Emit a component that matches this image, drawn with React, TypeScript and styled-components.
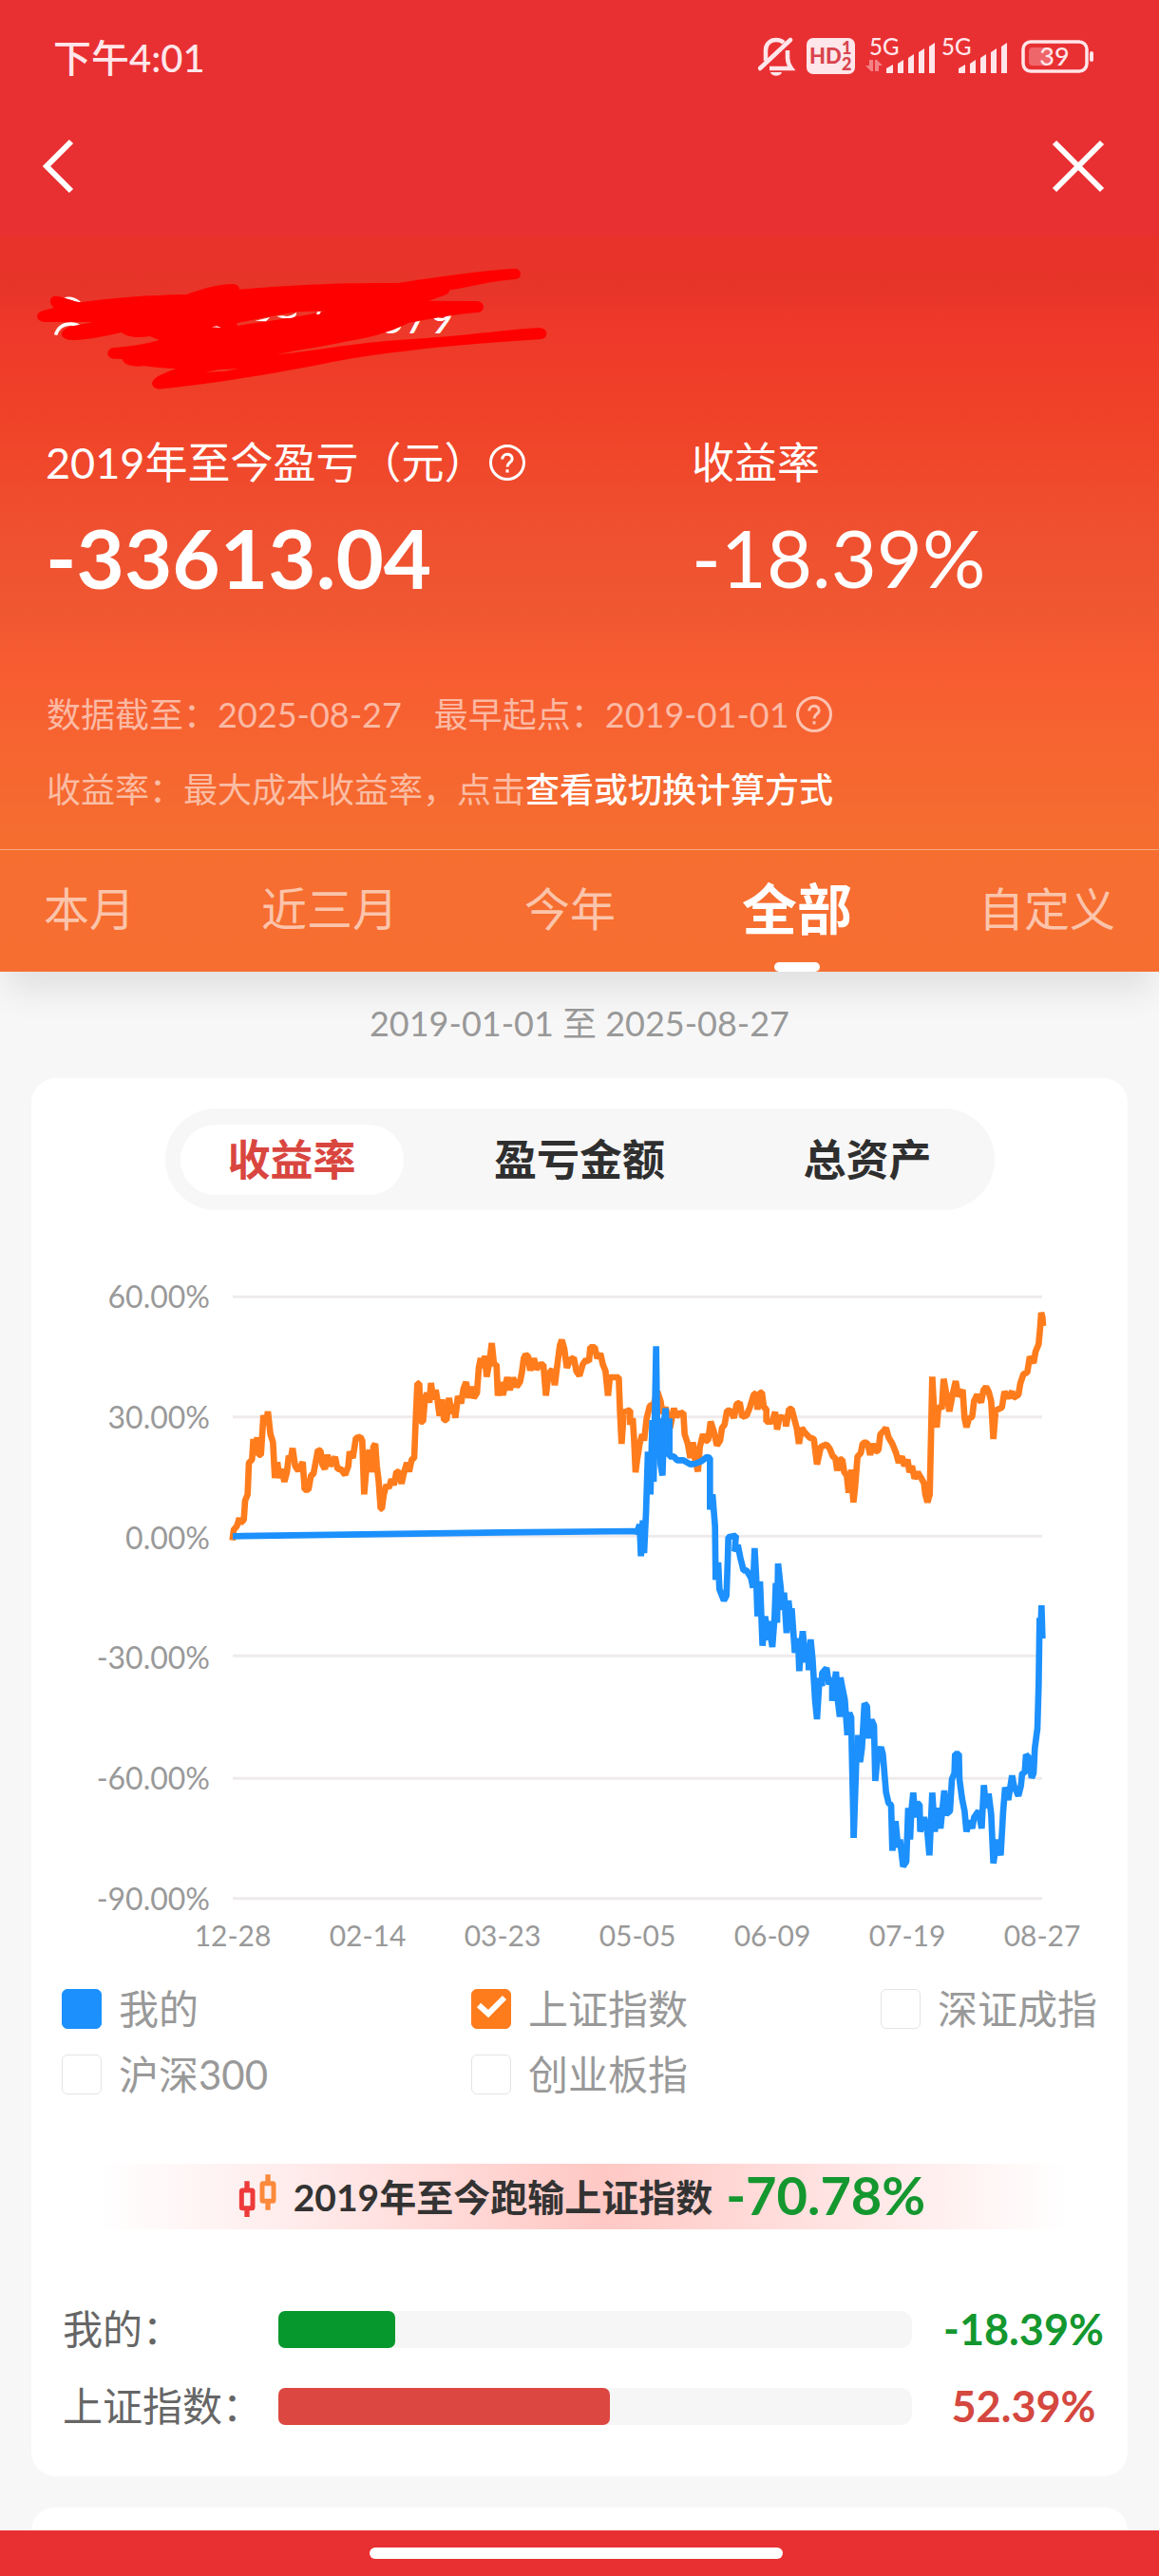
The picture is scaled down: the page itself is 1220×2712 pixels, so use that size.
import React, { useState } from "react";
import styled, { createGlobalStyle } from "styled-components";

const GlobalStyle = createGlobalStyle`
  * { box-sizing: border-box; }
  body {
    margin: 0;
    background: #f7f7f7;
    font-family: Lato, "Noto Sans CJK SC", sans-serif;
  }
  button, input { font: inherit; color: inherit; margin: 0; }
  button { border: 0; padding: 0; background: none; cursor: pointer; }
  svg { display: block; }
`;

const Page = styled.div`
  min-height: 100vh;
  display: flex;
  flex-direction: column;
  overflow: hidden;
`;

/* ---------- header ---------- */

const Header = styled.header`
  color: #fff;
  background: linear-gradient(
    #e83033 0px, #e83033 247px, #e73229 249px, #e8352a 310px, #ee382a 340px,
    #f04228 440px, #ef5030 560px, #ef5731 640px, #f75c31 700px,
    #f66630 810px, #f56e30 880px, #f76e31 100%
  );
  box-shadow: 0 26px 34px -6px rgba(0, 0, 0, 0.09);
  position: relative;
`;

const StatusBar = styled.div`
  height: 120px;
  padding: 0 68px 2px 56px;
  display: flex;
  align-items: center;
  justify-content: space-between;
  color: #ffe6ea;
  font-size: 40px;
  font-weight: 500;
`;

const NavBar = styled.nav`
  height: 110px;
  padding: 0 57px 0 43px;
  display: flex;
  align-items: center;
  justify-content: space-between;
`;

const Account = styled.div`
  position: relative;
  width: 560px;
  height: 160px;
  margin: 30px 0 0 30px;
  padding: 50px 112px 0 0;
  display: flex;
  justify-content: flex-end;
  align-items: flex-start;
  font-size: 45px;
  line-height: 48px;
`;

const Scribble = styled.svg`
  position: absolute;
  inset: 0;
  width: 100%;
  height: 100%;
`;

const Summary = styled.div`
  display: grid;
  grid-template-columns: 680fr 440fr;
  padding: 40px 52px 0 48px;
`;

const SummaryLabel = styled.div`
  display: flex;
  align-items: center;
  gap: 2px;
  height: 54px;
  font-size: 45px;
  line-height: 54px;
`;

const SummaryValue = styled.div<{ $strong?: boolean }>`
  margin-top: 29px;
  line-height: 88px;
  font-size: ${(p) => (p.$strong ? 87 : 83)}px;
  font-weight: ${(p) => (p.$strong ? 700 : 400)};
`;

const Notes = styled.div`
  padding: 96px 50px 0 49px;
  display: grid;
  gap: 29px;
  font-size: 36px;
  line-height: 50px;
  color: rgba(255, 255, 255, 0.56);
`;

const NoteRow = styled.div`
  display: flex;
  align-items: center;
`;

const NoteText = styled.span`
  margin-right: 34px;
`;

const NoteEnd = styled.span`
  margin-right: 6px;
`;

const NoteLink = styled.a`
  color: #fff;
  font-weight: 500;
  text-decoration: none;
`;

const PeriodTabs = styled.div`
  display: flex;
  justify-content: space-between;
  align-items: stretch;
  height: 129px;
  margin-top: 38px;
  padding: 0 46px;
  border-top: 1px solid rgba(255, 255, 255, 0.4);
`;

const PeriodTab = styled.button<{ $active: boolean }>`
  position: relative;
  padding-bottom: 10px;
  font-size: ${(p) => (p.$active ? 58 : 48)}px;
  font-weight: ${(p) => (p.$active ? 700 : 400)};
  color: ${(p) => (p.$active ? "#fff" : "rgba(255, 255, 255, 0.6)")};
  &::after {
    content: "";
    display: ${(p) => (p.$active ? "block" : "none")};
    position: absolute;
    left: calc(50% - 24px);
    bottom: 0;
    width: 48px;
    height: 10px;
    border-radius: 5px;
    background: #fff;
  }
`;

/* ---------- body ---------- */

const Range = styled.div`
  padding: 27px 0 31px;
  text-align: center;
  font-size: 36px;
  line-height: 54px;
  color: #999;
`;

const Card = styled.section`
  margin: 0 33px;
  padding: 32px 0 53px;
  background: #fff;
  border-radius: 26px;
`;

const NextCard = styled.section`
  flex: 1;
  min-height: 24px;
  margin: 33px 33px 0;
  background: #fff;
  border-radius: 26px 26px 0 0;
`;

const Segments = styled.div`
  display: flex;
  justify-content: space-between;
  align-items: center;
  width: 873px;
  max-width: 100%;
  height: 107px;
  margin: 0 auto;
  padding: 0 16px;
  border-radius: 54px;
  background: #f7f7f7;
`;

const Segment = styled.button<{ $active: boolean }>`
  width: 235px;
  height: 74px;
  border-radius: 37px;
  font-size: 45px;
  line-height: 74px;
  font-weight: 700;
  background: ${(p) => (p.$active ? "#fff" : "transparent")};
  color: ${(p) => (p.$active ? "#d9463f" : "#2f2f2f")};
`;

const Chart = styled.div`
  display: grid;
  grid-template-columns: 188px 1fr;
  column-gap: 24px;
  padding: 91px 90px 0 0;
  font-size: 32px;
  line-height: 36px;
  color: #999;
`;

const YAxis = styled.div`
  display: flex;
  flex-direction: column;
  justify-content: space-between;
  margin: -18px 0;
  text-align: right;
`;

const Plot = styled.svg`
  width: 100%;
  height: auto;
  overflow: visible;
`;

const XAxis = styled.div`
  display: grid;
  grid-template-columns: repeat(7, 1fr);
  margin: 20px 19px 0 141px;
  font-size: 30px;
  line-height: 36px;
  color: #999;
  text-align: center;
`;

const Legend = styled.div`
  display: grid;
  grid-template-columns: 431fr 431fr 229fr;
  row-gap: 27px;
  margin: 39px 31px 0 32px;
`;

const LegendItem = styled.label`
  display: flex;
  align-items: center;
  gap: 18px;
  height: 42px;
  font-size: 42px;
  line-height: 42px;
  white-space: nowrap;
  color: #999;
`;

const BoxWrap = styled.span`
  display: grid;
  svg, input { grid-area: 1 / 1; }
  svg { pointer-events: none; z-index: 1; }
`;

const Box = styled.input<{ $color: string }>`
  appearance: none;
  width: 42px;
  height: 42px;
  border: 1px solid #e4e4e4;
  border-radius: 6px;
  background: #fff;
  &:checked {
    border-color: ${(p) => p.$color};
    background: ${(p) => p.$color};
  }
`;

const Banner = styled.div`
  display: flex;
  align-items: center;
  justify-content: center;
  height: 69px;
  margin: 73px 62px 0 67px;
  padding-bottom: 4px;
  background: linear-gradient(90deg, #fff, #ffecec 20%, #ffc8c4 52%, #ffe6e5 78%, #fff);
  font-size: 39px;
  font-weight: 700;
  color: #333;
`;

const BannerText = styled.span`
  margin: 0 14px 0 18px;
`;

const BannerValue = styled.span`
  font-size: 56px;
  color: #14972f;
`;

const Bars = styled.div`
  display: grid;
  gap: 39px;
  margin: 84px 0 0 33px;
`;

const BarRow = styled.div`
  display: grid;
  grid-template-columns: 227px 1fr 227px;
  align-items: center;
  height: 42px;
  font-size: 42px;
  line-height: 42px;
  color: #666;
`;

const Track = styled.div`
  height: 39px;
  border-radius: 12px;
  background: #f6f6f6;
`;

const Fill = styled.div<{ $color: string }>`
  height: 100%;
  border-radius: 7px;
  background: ${(p) => p.$color};
`;

const BarValue = styled.span<{ $color: string }>`
  padding-left: 8px;
  text-align: center;
  font-size: 45px;
  font-weight: 700;
  color: ${(p) => p.$color};
`;

const BottomBar = styled.footer`
  display: flex;
  align-items: center;
  justify-content: center;
  height: 48px;
  padding-right: 7px;
  background: #e83033;
`;

const HomePill = styled.div`
  width: 435px;
  height: 12px;
  border-radius: 6px;
  background: #fff;
`;

const Help = ({ soft }: { soft?: boolean }) => (
  <button aria-label="说明">
    <svg width="40" height="40" viewBox="0 0 40 40" fill="none" stroke="#fff"
      strokeOpacity={soft ? 0.62 : 1} strokeWidth="3">
      <circle cx="20" cy="20" r="17.5" />
      <path d="M14.800 16.500c0-7 10.400-6.600 10.400-.6 0 3.800-5.200 4-5.200 8.600M20 27.200v3.300" />
    </svg>
  </button>
);

const StatusIcons = () => (
  <svg width="354" height="64" viewBox="0 -8 354 64" fill="#ffe6ea"
    fontFamily='Lato, "Noto Sans CJK SC", sans-serif'>
    <g fill="none" stroke="#ffe6ea" strokeWidth="4.500">
      <path d="M8 29V18c0-7 5-11 11-11 3 0 6 1 8 3M31 18v8c0 5 1 7 4 11H12" />
      <path d="M2 37L34 7" strokeLinecap="round" />
    </g>
    <path d="M13 41h12c-1 5-11 5-12 0z" />
    <rect x="51" y="5" width="51" height="38" rx="7" />
    <g fill="#d8454c" fontWeight="900">
      <text x="54" y="32" fontSize="22">HD</text>
      <text x="88" y="22" fontSize="18">1</text>
      <text x="88" y="39" fontSize="18">2</text>
    </g>
    <text x="117" y="23" fontSize="24">5G</text>
    <text x="193" y="23" fontSize="24">5G</text>
    <path opacity=".45" d="M117 28h4v12h-2l-6-6h4zM123 40V28h2l6 6h-4v6z" />
    {[135, 211].map((x) => (
      <g key={x}>
        <path d={`M${x} 42v-5l7-4v9z`} />
        <path d={`M${x + 12} 42v-10l6-4v14z`} />
        <path d={`M${x + 23} 42v-16l6-4v20z`} />
        <path d={`M${x + 34} 42v-22l6-4v26z`} />
        <path d={`M${x + 45} 42v-28l6-4v32z`} />
      </g>
    ))}
    <rect x="279" y="9" width="67" height="31" rx="8" fill="none" stroke="#ffe6ea" strokeWidth="3.500" />
    <rect x="285" y="15" width="22" height="19" rx="4" opacity=".3" />
    <text x="312" y="34" fontSize="27" textAnchor="middle">39</text>
    <rect x="349" y="19" width="4" height="11" rx="2" />
  </svg>
);

/* Traced in thirds of a pixel of the plot area; each run has its own origin. */
const INDEX_A =
  "14,665 18,632 28,620 36,595 40,610 50,600 54,540 62,520 66,420 76,410 80,345 84,395 92,340 97,395 104,395 112,270 120,300 126,258 134,330 142,355 148,468 156,418 162,468 170,440 178,480 186,450 192,398 198,410 204,374 212,430 222,445 236,418 242,505 254,505 262,460 270,455 284,380 292,382 298,425 306,440 314,395 322,430 338,402 346,440 356,440 370,458 380,430 384,385 394,405 404,342 418,338 424,350 430,520 440,400 447,380 453,450 459,370 465,360 470,430 476,480 482,565 486,565 492,520 500,490 508,500 516,472 524,490 532,448 540,450 548,486 556,450 565,420 572,448 580,410 588,405 593,280 598,170 604,170 608,290 616,290 622,215 628,200 636,230 641,168 648,220 656,190 662,225 668,272 676,220 682,285 690,285 698,215 706,265 712,235 718,278 726,210 736,232 744,185 752,165 760,215 768,180 776,215 786,200 792,120 798,90 806,120 811,82 817,148 826,100 833,42 840,110 848,110 852,208 860,165 868,206 882,150 890,190 900,152 912,180 922,165 928,135 934,90 940,78 948,85 954,128 966,90 974,125 984,110 996,110 1004,208 1012,140 1024,125 1032,175 1040,110 1048,50 1054,32 1062,60 1070,120 1080,95 1092,88 1100,130 1110,145 1120,110 1130,95 1140,100 1144,55 1158,55 1166,90 1176,75 1184,110 1192,130 1200,208 1206,150 1234,150 1238,260 1243,360 1250,260 1268,255";
const INDEX_B =
  "0,375 10,375 10,420 18,400 22,460 27,570 32,530 40,480 48,450 54,470 62,400 72,360 84,355 96,315 106,345 112,385 122,365 136,430 148,368 156,395 164,385 178,382 182,450 192,480 200,525 208,475 214,525 224,568 230,490 240,450 248,470 256,470 264,410 274,440 284,485 294,470 300,430 308,420 316,375 326,375 338,398 346,355 356,350 364,395 378,390 388,365 400,325 408,320 412,372 420,318 426,318 432,365 440,370 440,410 458,410 468,380 474,435 482,395 500,400 502,425 512,370 520,370 528,400 536,430 543,480 552,430 562,445 576,460 590,465 600,545 612,490 630,482 640,495 650,520 658,525 664,565 672,530 680,530 686,570 694,580 700,635 708,562 715,665 720,620 728,520 738,510 744,480 752,475 760,480 768,515 776,480 784,505 794,500 800,450 810,440 818,430 826,460 838,480 850,510 858,540 868,520 876,550 886,530 892,570 900,550 908,590 918,570 930,590 938,605 942,640 949,665 956,640 960,460 964,268 970,380 978,428 984,360 994,370 1000,275 1008,320 1018,378 1028,325 1038,282 1046,330 1060,310 1066,400 1072,428 1080,400 1090,395 1096,345 1106,325 1118,350 1126,310 1134,300 1142,315 1150,345 1157,465 1164,375 1184,365 1192,315 1202,335 1216,315 1220,335 1236,325 1242,290 1252,260 1264,255 1272,205 1284,225 1290,190 1300,165 1305,110 1308,66 1312,80 1314,108";
const MINE_B =
  "-1245,772 -400,760 20,756 32,758 40,735 44,835 50,722 54,825 60,700 66,505 74,640 80,405 84,600 92,172 96,480 102,400 106,545 112,580 118,400 122,368 128,500 134,400 134,520 148,520 158,532 178,532 200,545 215,543 235,535 252,522 262,525 262,688 270,640 278,740 280,910 288,855 292,940 306,975 314,960 318,850 320,775 344,770 340,820 350,800 358,840 368,880 378,880 392,905 398,935 403,810 408,900 412,1025 420,915 428,1118 436,1025 448,1100 446,1040 459,1122 466,1030 470,920 474,1045 477,858 486,940 488,1005 496,950 504,1078 510,975 518,1055 520,1000 530,1140 540,1095 544,1198 550,1120 555,1072 564,1170 572,1110 574,1195 580,1098 586,1160 594,1290 600,1350 608,1220 616,1245 616,1205 630,1188 638,1240 648,1220 648,1292 660,1200 664,1275 672,1342 674,1218 682,1260 688,1290 696,1400 702,1330 708,1345 710,1450 716,1725";
const MINE_C =
  "176,765 184,520 190,440 196,525 202,480 210,340 218,350 222,450 232,392 240,410 244,585 252,500 262,478 268,500 278,620 286,655 294,660 298,805 308,712 316,795 322,770 332,855 342,840 348,670 354,770 358,680 364,622 370,700 376,655 384,660 386,745 398,700 408,740 415,820 424,622 432,745 442,670 450,735 462,615 468,690 480,680 486,580 494,560 496,500 508,500 510,580 518,640 526,680 532,745 542,710 550,735 556,700 570,680 580,735 587,598 594,670 602,625 610,690 617,845 628,770 640,820 648,680 654,605 664,645 676,568 682,600 696,632 704,600 708,560 716,560 720,502 728,510 738,575 744,560 748,480 756,420 760,280 763,70 766,120 769,30 772,135";

const GRID = [1, 380, 757, 1135, 1522, 1901];
const Y_LABELS = ["60.00%", "30.00%", "0.00%", "-30.00%", "-60.00%", "-90.00%"];
const X_LABELS = ["12-28", "02-14", "03-23", "05-05", "06-09", "07-19", "08-27"];
const PERIODS = ["本月", "近三月", "今年", "全部", "自定义"];
const METRICS = ["收益率", "盈亏金额", "总资产"];
const SERIES = [
  { name: "我的", color: "#1c90fd", on: true },
  { name: "上证指数", color: "#ff7c1c", on: true, tick: true },
  { name: "深证成指", color: "#ff7c1c" },
  { name: "沪深300", color: "#ff7c1c" },
  { name: "创业板指", color: "#ff7c1c" },
];
const BARS = [
  { name: "我的：", value: "-18.39%", share: 18.39, fill: "#07982d", text: "#14972f" },
  { name: "上证指数：", value: "52.39%", share: 52.39, fill: "#dc4841", text: "#d4483f" },
];

export default function App() {
  const [period, setPeriod] = useState("全部");
  const [metric, setMetric] = useState("收益率");

  return (
    <Page>
      <GlobalStyle />
      <Header>
        <StatusBar>
          <span>下午4:01</span>
          <StatusIcons />
        </StatusBar>
        <NavBar>
          <button aria-label="返回">
            <svg width="36" height="60" viewBox="0 0 36 60" fill="none" stroke="#fff" strokeWidth="6">
              <path d="M32 4L6 30l26 26" />
            </svg>
          </button>
          <button aria-label="关闭">
            <svg width="56" height="56" viewBox="0 0 56 56" fill="none" stroke="#fff" strokeWidth="6">
              <path d="M3 3l50 50M53 3L3 53" />
            </svg>
          </button>
        </NavBar>
        <Account>
          <span>579</span>
          <Scribble viewBox="0 0 1568 480" preserveAspectRatio="none">
            <g fill="none" stroke="#fff" strokeWidth="10">
              <path d="M80 278Q90 243 125 243Q140 243 152 252" />
              <path d="M105 166Q125 155 150 176" />
            </g>
            <path
              fill="#f00"
              fillRule="evenodd"
              d="M45 200L75 192C60 180 60 155 80 155C100 155 130 172 155 175C250 160 350 152 465 150C520 130 560 117 605 117Q622 120 622 134C750 122 900 112 1090 114C1200 95 1330 75 1435 68Q1450 70 1450 86Q1450 100 1435 102C1380 105 1300 125 1242 136Q1240 148 1225 153L1180 170L1325 171Q1341 175 1341 190Q1341 205 1325 207C1260 212 1180 228 1120 240C1080 262 1020 285 940 298C880 312 800 325 730 340C860 325 980 300 1100 293C1250 285 1400 262 1505 255Q1527 258 1527 273Q1527 290 1505 292C1300 305 1100 325 900 362C700 405 550 430 385 449Q365 448 364 430C368 410 400 398 435 384C400 384 370 380 340 376C300 380 280 370 276 354L250 353Q233 350 233 336Q235 320 252 318C300 315 350 305 385 294L358 282C320 288 290 285 275 270C220 282 170 295 130 294Q97 292 97 272Q105 255 130 250L190 237L45 237Q25 232 25 218Q28 204 45 200ZM615 240L700 222L790 205L875 202C800 222 700 235 615 249ZM520 396L560 388L620 384L580 392Z"
            />
            <path fill="#fff" d="M540 253L555 250L568 255ZM668 233L712 222L700 235ZM732 218L750 217C770 222 775 215 790 207Q790 222 775 224Q745 228 732 218ZM848 213L852 204L862 204L858 212Z" />
          </Scribble>
        </Account>
        <Summary>
          <div>
            <SummaryLabel>
              2019年至今盈亏（元）
              <Help />
            </SummaryLabel>
            <SummaryValue $strong>-33613.04</SummaryValue>
          </div>
          <div>
            <SummaryLabel>收益率</SummaryLabel>
            <SummaryValue>-18.39%</SummaryValue>
          </div>
        </Summary>
        <Notes>
          <NoteRow>
            <NoteText>数据截至：2025-08-27</NoteText>
            <NoteEnd>最早起点：2019-01-01</NoteEnd>
            <Help soft />
          </NoteRow>
          <NoteRow>
            收益率：最大成本收益率，点击
            <NoteLink href="#method">查看或切换计算方式</NoteLink>
          </NoteRow>
        </Notes>
        <PeriodTabs>
          {PERIODS.map((name) => (
            <PeriodTab key={name} $active={name === period} onClick={() => setPeriod(name)}>
              {name}
            </PeriodTab>
          ))}
        </PeriodTabs>
      </Header>

      <Range>2019-01-01 至 2025-08-27</Range>

      <Card>
        <Segments>
          {METRICS.map((name) => (
            <Segment key={name} $active={name === metric} onClick={() => setMetric(name)}>
              {name}
            </Segment>
          ))}
        </Segments>

        <Chart>
          <YAxis>
            {Y_LABELS.map((label) => (
              <span key={label}>{label}</span>
            ))}
          </YAxis>
          <Plot viewBox="0 0 2556 1902" role="img" aria-label="收益率走势">
            <g stroke="#efebec" strokeWidth="9">
              {GRID.map((y) => (
                <line key={y} x1="0" x2="2556" y1={y} y2={y} />
              ))}
            </g>
            <g fill="none" strokeWidth="20" strokeLinejoin="bevel">
              <g stroke="#ff7c1c">
                <polyline transform="translate(-15 105)" points={INDEX_A} />
                <polyline transform="translate(1245 -15)" points={INDEX_B} />
              </g>
              <g stroke="#1c90fd">
                <polyline transform="translate(1245 -15)" points={MINE_B} />
                <polyline transform="translate(1785 945)" points={MINE_C} />
              </g>
            </g>
          </Plot>
        </Chart>
        <XAxis>
          {X_LABELS.map((label) => (
            <span key={label}>{label}</span>
          ))}
        </XAxis>

        <Legend>
          {SERIES.map((s) => (
            <LegendItem key={s.name}>
              <BoxWrap>
                <Box type="checkbox" defaultChecked={s.on} $color={s.color} />
                {s.tick && (
                  <svg width="42" height="42" viewBox="0 0 42 42" fill="none" stroke="#fff" strokeWidth="6">
                    <path d="M8 17l10 9L35 9" />
                  </svg>
                )}
              </BoxWrap>
              {s.name}
            </LegendItem>
          ))}
        </Legend>

        <Banner>
          <svg width="40" height="46" viewBox="0 0 120 138" fill="none" strokeWidth="15">
            <g stroke="#ee3a3a">
              <rect x="10" y="54" width="35" height="56" rx="3" />
              <path d="M27 25v29M27 110v28" strokeWidth="16" />
            </g>
            <g stroke="#fb8a3c">
              <rect x="75" y="32" width="36" height="56" rx="3" />
              <path d="M93 4v28M93 88v28" strokeWidth="16" />
            </g>
          </svg>
          <BannerText>2019年至今跑输上证指数</BannerText>
          <BannerValue>-70.78%</BannerValue>
        </Banner>

        <Bars>
          {BARS.map((b) => (
            <BarRow key={b.name}>
              <span>{b.name}</span>
              <Track>
                <Fill $color={b.fill} style={{ width: `${b.share}%` }} />
              </Track>
              <BarValue $color={b.text}>{b.value}</BarValue>
            </BarRow>
          ))}
        </Bars>
      </Card>
      <NextCard />
      <BottomBar>
        <HomePill />
      </BottomBar>
    </Page>
  );
}
